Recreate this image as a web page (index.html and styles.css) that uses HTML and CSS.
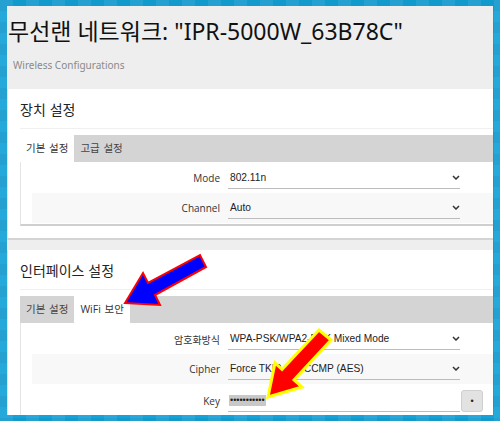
FILE: index.html
```html
<!DOCTYPE html>
<html lang="ko">
<head>
<meta charset="utf-8">
<title>무선랜 네트워크</title>
<link rel="stylesheet" href="styles.css">
</head>
<body>
<div class="frame">
  <div class="page">
    <h1 class="title">무선랜 네트워크: "IPR-5000W_63B78C"</h1>
    <div class="subtitle">Wireless Configurations</div>

    <section class="card">
      <h2 class="card-title">장치 설정</h2>
      <div class="tabs">
        <span class="tab active">기본 설정</span>
        <span class="tab">고급 설정</span>
      </div>
      <div class="panel">
        <div class="row">
          <span class="label">Mode</span>
          <div class="select"><span class="value">802.11n</span><svg class="chev" width="8" height="5" viewBox="0 0 8 5"><path d="M1 1 L4 4 L7 1" fill="none" stroke="#333" stroke-width="1.5"/></svg></div>
        </div>
        <div class="row alt">
          <span class="label">Channel</span>
          <div class="select"><span class="value">Auto</span><svg class="chev" width="8" height="5" viewBox="0 0 8 5"><path d="M1 1 L4 4 L7 1" fill="none" stroke="#333" stroke-width="1.5"/></svg></div>
        </div>
      </div>
    </section>

    <section class="card">
      <h2 class="card-title">인터페이스 설정</h2>
      <div class="tabs">
        <span class="tab">기본 설정</span>
        <span class="tab active">WiFi 보안</span>
      </div>
      <div class="panel">
        <div class="row">
          <span class="label">암호화방식</span>
          <div class="select"><span class="value">WPA-PSK/WPA2-PSK Mixed Mode</span><svg class="chev" width="8" height="5" viewBox="0 0 8 5"><path d="M1 1 L4 4 L7 1" fill="none" stroke="#333" stroke-width="1.5"/></svg></div>
        </div>
        <div class="row alt">
          <span class="label">Cipher</span>
          <div class="select"><span class="value">Force TKIP and CCMP (AES)</span><svg class="chev" width="8" height="5" viewBox="0 0 8 5"><path d="M1 1 L4 4 L7 1" fill="none" stroke="#333" stroke-width="1.5"/></svg></div>
        </div>
        <div class="row key">
          <span class="label">Key</span>
          <div class="select input"><span class="dots">•••••••••••</span></div>
          <span class="reveal">•</span>
        </div>
      </div>
    </section>
  </div>
</div>

<svg class="arrows" width="500" height="421" viewBox="0 0 500 421">
  <polygon points="125,303 160,305 155,295 206,267 200,255 148,283 143,273" fill="#0000ff" stroke="#ff0000" stroke-width="2" stroke-linejoin="miter"/>
  <polygon points="268,397 302,387 294,380 331,340 319,330 282,369.5 275,363" fill="#ff0000" stroke="#ffff00" stroke-width="3" stroke-linejoin="miter"/>
</svg>
</body>
</html>
```

FILE: styles.css
```css
html, body {
  margin: 0;
  padding: 0;
}

body {
  width: 500px;
  height: 421px;
  overflow: hidden;
  position: relative;
  font-family: "Noto Sans", "Noto Sans CJK KR", sans-serif;
  background-color: #14a2d8;
  background-image:
    linear-gradient(90deg, rgba(255,255,255,0.07) 50%, rgba(0,0,0,0) 50%),
    linear-gradient(rgba(0,0,0,0.05) 50%, rgba(0,0,0,0) 50%);
  background-size: 26px 26px, 22px 22px;
}

.frame {
  padding: 6px 7px 6px 7px;
}

.page {
  height: 409px;
  overflow: hidden;
  background: #eeeeee;
  padding-top: 10px;
  box-sizing: border-box;
}

.title {
  margin: 0 0 0 1px;
  font-family: "Noto Sans", "Noto Sans CJK KR", sans-serif;
  font-weight: normal;
  font-size: 23px;
  line-height: 30px;
  color: #111;
  white-space: nowrap;
}

.subtitle {
  margin: 12px 0 0 6px;
  font-family: "Noto Sans", sans-serif;
  font-size: 10px;
  line-height: 14px;
  color: #8a8a8a;
}

.card {
  background: #fff;
  border-left: 1px solid #e2e2e2;
  border-bottom: 2px solid #d4d4d4;
  padding: 10px 0 12px 12px;
}

.subtitle + .card {
  margin-top: 17px;
}

.card + .card {
  margin-top: 10px;
}

.card-title {
  margin: 0 0 6px 0;
  padding-bottom: 9px;
  border-bottom: 1px solid #f0f0f0;
  font-family: "Noto Sans CJK KR", sans-serif;
  font-weight: normal;
  font-size: 14px;
  line-height: 20px;
  color: #222;
}

.tabs {
  display: flex;
  height: 27px;
  background: #d4d4d4;
}

.tab {
  padding: 0 6px;
  line-height: 27px;
  font-family: "Open Sans", "Noto Sans CJK KR", sans-serif;
  font-size: 10.5px;
  word-spacing: 1px;
  color: #444;
}

.tab.active {
  background: #fff;
  color: #333;
}

.panel {
  background: #fff;
  border-left: 1px solid #e4e4e4;
  border-bottom: 2px solid #cfcfcf;
  padding: 1px 0;
}

.row {
  display: flex;
  align-items: center;
  height: 30px;
  margin-left: 11px;
}

.row.alt {
  background: #f8f8f8;
}

.row.key {
  height: 34px;
}

.label {
  width: 188px;
  text-align: right;
  font-family: "Open Sans", "Noto Sans CJK KR", sans-serif;
  font-size: 10px;
  color: #333;
  flex-shrink: 0;
}

.select {
  margin-left: 8px;
  width: 232px;
  height: 20px;
  border-bottom: 1px solid #bcbcbc;
  display: flex;
  align-items: center;
  justify-content: space-between;
  box-sizing: content-box;
  flex-shrink: 0;
}

.value {
  padding-left: 2px;
  font-family: "Liberation Sans", Arial, sans-serif;
  font-size: 10.2px;
  color: #222;
  white-space: nowrap;
}

.chev {
  margin-right: 0;
  display: block;
}

.dots {
  margin-left: 1px;
  padding: 0 1px;
  background: #c8c8c8;
  font-family: "Liberation Sans", Arial, sans-serif;
  font-size: 9px;
  line-height: 11px;
  color: #222;
  letter-spacing: 0;
}

.reveal {
  margin-left: 1px;
  width: 20px;
  height: 20px;
  border: 1px solid #cfcfcf;
  border-radius: 3px;
  background: #e2e2e2;
  font-family: "Liberation Sans", Arial, sans-serif;
  font-size: 9px;
  line-height: 20px;
  text-align: center;
  color: #222;
  flex-shrink: 0;
}

.arrows {
  position: absolute;
  left: 0;
  top: 0;
  pointer-events: none;
}
```
